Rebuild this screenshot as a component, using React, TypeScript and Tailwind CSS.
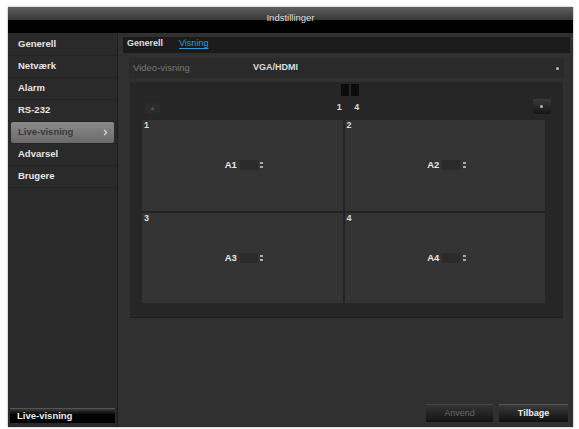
import { ChevronRight } from "lucide-react";

const menu = ["Generell", "Netværk", "Alarm", "RS-232", "Live-visning", "Advarsel", "Brugere"];
const cells = [
  { n: "1", ch: "A1" },
  { n: "2", ch: "A2" },
  { n: "3", ch: "A3" },
  { n: "4", ch: "A4" },
];

function Spinner() {
  return (
    <span className="flex flex-col items-center justify-center gap-[2px] w-[8px]">
      <span className="w-[3px] h-[2px] bg-[#aaa]"></span>
      <span className="w-[3px] h-[2px] bg-[#aaa]"></span>
    </span>
  );
}

export default function App() {
  return (
    <div className="w-[579px] h-[429px] bg-white pt-[7px] pl-[8px] font-['Liberation_Sans',Arial,sans-serif]">
      <div className="w-[565px] h-[420px] flex flex-col bg-[#2c2c2c] shadow-[0_0_2px_rgba(0,0,0,0.4)]">
        {/* title */}
        <div className="h-[26px] flex items-center justify-center bg-[linear-gradient(#5e5e5e,#3a3a3a_48%,#000_52%,#000)]">
          <span className="text-[9.5px] text-[#ddd] mt-[-3px]">Indstillinger</span>
        </div>
        <div className="flex-1 flex">
          {/* sidebar */}
          <div className="w-[110px] bg-[#2a2a2a] border-r border-[#1c1c1c] flex flex-col justify-between pb-[4px]">
            <div className="flex flex-col pt-[1px]">
              {menu.map((m) => (
                <div key={m} className="h-[22px] px-[3px] border-b border-[#242424]">
                  {m === "Live-visning" ? (
                    <div className="h-[21px] rounded-[2px] bg-[linear-gradient(#8a8a8a,#6a6a6a)] flex items-center justify-between pl-[7px] pr-[4px]">
                      <span className="text-[9.5px] font-bold text-[#3a3a3a]">{m}</span>
                      <ChevronRight size={9} strokeWidth={3} className="text-[#ddd]" />
                    </div>
                  ) : (
                    <div className="h-[21px] flex items-center pl-[7px]">
                      <span className="text-[9.5px] font-bold text-[#e6e6e6]">{m}</span>
                    </div>
                  )}
                </div>
              ))}
            </div>
            <div className="mx-[2px] h-[15px] bg-[linear-gradient(#3a3a3a,#050505_40%,#000)] border-t border-[#555] flex items-center pl-[7px]">
              <span className="text-[9.5px] font-bold text-[#eee]">Live-visning</span>
            </div>
          </div>
          {/* content */}
          <div className="flex-1 bg-[#303030] flex flex-col pl-[5px] pr-[3px] pt-[4px] pb-[5px]">
            <div className="h-[16px] bg-[#1b1b1b] flex items-end gap-[16px] px-[4px]">
              <span className="text-[9px] font-bold text-[#e0e0e0] pb-[3px]">Generell</span>
              <span className="text-[9px] text-[#2b9ad6] underline underline-offset-2 pb-[3px]">Visning</span>
            </div>
            <div className="mt-[5px] mx-[6px] h-[20px] bg-[#2a2a2a] flex items-center pl-[4px] pr-[5px]">
              <span className="w-[120px] text-[9.5px] text-[#777]">Video-visning</span>
              <span className="flex-1 text-[9px] font-bold text-[#ddd]">VGA/HDMI</span>
              <span className="w-[3px] h-[3px] rounded-full bg-[#bbb]"></span>
            </div>
            <div className="mt-[4px] mx-[7px] h-[236px] bg-[#262626] border-b border-[#1e1e1e] flex flex-col px-[12px] pt-[2px]">
              <div className="flex justify-center gap-[2px] h-[14px] pl-[6px]">
                <span className="w-[8px] h-[12px] bg-[#0c0c0c]"></span>
                <span className="w-[8px] h-[12px] bg-[#0c0c0c]"></span>
              </div>
              <div className="h-[20px] flex items-center justify-between pl-[3px]">
                <span className="w-[15px] h-[11px] rounded-[2px] bg-[#2c2c2c] flex items-center justify-center text-[6px] text-[#555]">▲</span>
                <span className="text-[9px] font-bold text-[#ddd] pl-[8px] tracking-[5px]">1 4</span>
                <span className="w-[18px] h-[15px] mb-[3px] rounded-[2px] bg-[linear-gradient(#3a3a3a,#161616)] flex items-center justify-center">
                  <span className="w-[3px] h-[3px] rounded-full bg-[#bbb]"></span>
                </span>
              </div>
              <div className="mt-[2px] w-[403px] h-[183px] grid grid-cols-2 grid-rows-2 gap-[2px] bg-[#222]">
                {cells.map((c) => (
                  <div key={c.n} className="bg-[#333333] flex flex-col">
                    <span className="text-[9px] font-bold text-[#ddd] pl-[2px] h-[10px] leading-[10px]">{c.n}</span>
                    <div className="flex-1 flex items-center justify-center pb-[10px] pl-[6px]">
                      <span className="text-[9.5px] font-bold text-[#e8e8e8] w-[14px]">{c.ch}</span>
                      <span className="w-[18px] h-[10px] bg-[#2a2a2a] ml-[1px]"></span>
                      <Spinner />
                    </div>
                  </div>
                ))}
              </div>
            </div>
            <div className="flex-1"></div>
            <div className="flex justify-end gap-[6px] pr-[2px]">
              <div className="w-[67px] h-[18px] bg-[linear-gradient(#333,#141414)] border-t border-[#444] flex items-center justify-center">
                <span className="text-[9px] text-[#666]">Anvend</span>
              </div>
              <div className="w-[69px] h-[18px] bg-[linear-gradient(#3a3a3a,#101010)] border-t border-[#555] flex items-center justify-center">
                <span className="text-[9px] font-bold text-[#eee]">Tilbage</span>
              </div>
            </div>
          </div>
        </div>
      </div>
    </div>
  );
}
